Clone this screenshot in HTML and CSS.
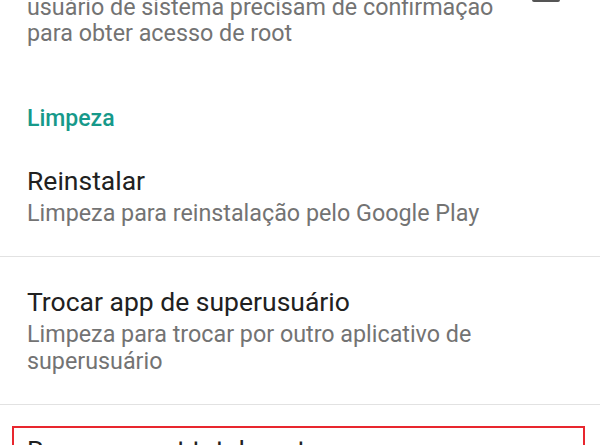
FILE: index.html
```html
<!DOCTYPE html>
<html lang="pt-BR">
<head>
<meta charset="utf-8">
<title>Configurações</title>
<link rel="stylesheet" href="styles.css">
</head>
<body>
<div class="list">
  <div class="item item-first">
    <div class="text">
      <div class="title">Confiar no sistema</div>
      <div class="summary">Se desativado, aplicativos e processos do usuário de sistema precisam de confirmação para obter acesso de root</div>
    </div>
    <div class="checkbox"></div>
  </div>

  <div class="category">Limpeza</div>

  <div class="item divided">
    <div class="text">
      <div class="title">Reinstalar</div>
      <div class="summary">Limpeza para reinstalação pelo Google Play</div>
    </div>
  </div>

  <div class="item divided">
    <div class="text">
      <div class="title">Trocar app de superusuário</div>
      <div class="summary">Limpeza para trocar por outro aplicativo de superusuário</div>
    </div>
  </div>

  <div class="item highlighted">
    <div class="text">
      <div class="title">Remover root totalmente</div>
      <div class="summary">Limpeza completa do root</div>
    </div>
    <div class="highlight-box"></div>
  </div>
</div>
</body>
</html>
```

FILE: styles.css
```css
html, body {
  margin: 0;
  padding: 0;
  background: #ffffff;
}

body {
  width: 600px;
  height: 445px;
  overflow: hidden;
  font-family: Roboto, "Noto Sans", "Liberation Sans", sans-serif;
}

.list {
  display: flex;
  flex-direction: column;
}

.item {
  position: relative;
  display: flex;
  align-items: flex-start;
  padding: 28px 27px 30px 27px;
}

.item .text {
  flex: 1;
  min-width: 0;
}

.title {
  font-size: 26.5px;
  line-height: 34px;
  color: #212121;
}

.summary {
  margin-top: 2px;
  font-size: 23.3px;
  line-height: 26.5px;
  color: #737373;
}

.item-first {
  margin-top: -97px;
  padding-right: 40px;
}

.item-first .text {
  max-width: 480px;
}

.checkbox {
  flex: none;
  width: 24px;
  height: 24px;
  border: 2px solid #555555;
  border-radius: 2px;
  margin-top: 43px;
  margin-left: 26px;
}

.category {
  padding: 27px 27px 2px 27px;
  font-size: 23px;
  line-height: 30px;
  font-weight: 500;
  color: #16998a;
}

.divided {
  border-bottom: 1px solid #e2e2e2;
}

.highlight-box {
  position: absolute;
  left: 12px;
  top: 21px;
  width: 569px;
  height: 120px;
  border: 2px solid #e8262e;
}
```
